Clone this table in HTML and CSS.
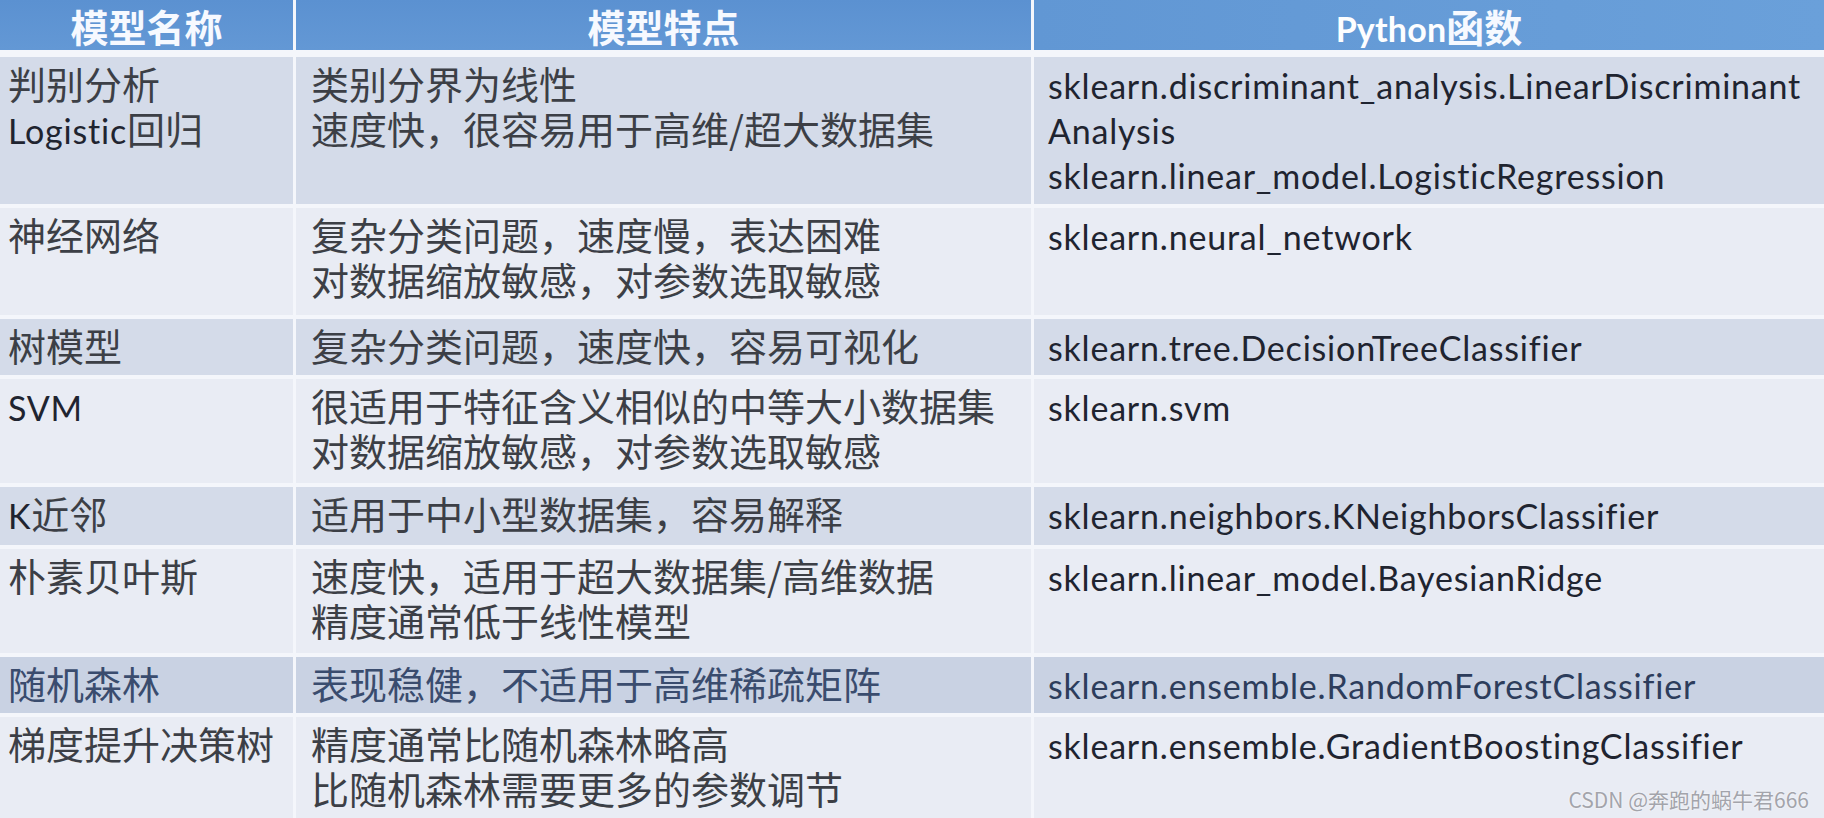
FILE: index.html
```html
<!DOCTYPE html>
<html lang="zh-CN">
<head>
<meta charset="utf-8">
<title>模型对比</title>
<link rel="stylesheet" href="styles.css">
</head>
<body>
<div class="table">
  <div class="th"><span class="zh">模型名称</span></div>
  <div class="th"><span class="zh">模型特点</span></div>
  <div class="th th-last">Python<span class="zh">函数</span></div>

  <div class="td c1 dark"><div class="ln"><span class="zh">判别分析</span></div><div class="ln">Logistic<span class="zh">回归</span></div></div>
  <div class="td c2 dark"><div class="ln"><span class="zh">类别分界为线性</span></div><div class="ln"><span class="zh">速度快，很容易用于高维/超大数据集</span></div></div>
  <div class="td c3 dark"><div class="ln">sklearn.discriminant_analysis.LinearDiscriminant</div><div class="ln">Analysis</div><div class="ln">sklearn.linear_model.LogisticRegression</div></div>

  <div class="td c1 light"><div class="ln"><span class="zh">神经网络</span></div></div>
  <div class="td c2 light"><div class="ln"><span class="zh">复杂分类问题，速度慢，表达困难</span></div><div class="ln"><span class="zh">对数据缩放敏感，对参数选取敏感</span></div></div>
  <div class="td c3 light"><div class="ln">sklearn.neural_network</div></div>

  <div class="td c1 dark"><div class="ln"><span class="zh">树模型</span></div></div>
  <div class="td c2 dark"><div class="ln"><span class="zh">复杂分类问题，速度快，容易可视化</span></div></div>
  <div class="td c3 dark"><div class="ln">sklearn.tree.DecisionTreeClassifier</div></div>

  <div class="td c1 light"><div class="ln">SVM</div></div>
  <div class="td c2 light"><div class="ln"><span class="zh">很适用于特征含义相似的中等大小数据集</span></div><div class="ln"><span class="zh">对数据缩放敏感，对参数选取敏感</span></div></div>
  <div class="td c3 light"><div class="ln">sklearn.svm</div></div>

  <div class="td c1 dark"><div class="ln">K<span class="zh">近邻</span></div></div>
  <div class="td c2 dark"><div class="ln"><span class="zh">适用于中小型数据集，容易解释</span></div></div>
  <div class="td c3 dark"><div class="ln">sklearn.neighbors.KNeighborsClassifier</div></div>

  <div class="td c1 light"><div class="ln"><span class="zh">朴素贝叶斯</span></div></div>
  <div class="td c2 light"><div class="ln"><span class="zh">速度快，适用于超大数据集/高维数据</span></div><div class="ln"><span class="zh">精度通常低于线性模型</span></div></div>
  <div class="td c3 light"><div class="ln">sklearn.linear_model.BayesianRidge</div></div>

  <div class="td c1 hl"><div class="ln"><span class="zh">随机森林</span></div></div>
  <div class="td c2 hl"><div class="ln"><span class="zh">表现稳健，不适用于高维稀疏矩阵</span></div></div>
  <div class="td c3 hl"><div class="ln">sklearn.ensemble.RandomForestClassifier</div></div>

  <div class="td c1 light"><div class="ln"><span class="zh">梯度提升决策树</span></div></div>
  <div class="td c2 light"><div class="ln"><span class="zh">精度通常比随机森林略高</span></div><div class="ln"><span class="zh">比随机森林需要更多的参数调节</span></div></div>
  <div class="td c3 light"><div class="ln">sklearn.ensemble.GradientBoostingClassifier</div></div>
</div>
<div class="watermark">CSDN @奔跑的蜗牛君666</div>
</body>
</html>
```

FILE: styles.css
```css
html, body {
  margin: 0;
  padding: 0;
}
body {
  width: 1824px;
  height: 818px;
  overflow: hidden;
  background: #f4f6fb;
  position: relative;
  font-family: Lato, "Noto Sans CJK SC", sans-serif;
  font-size: 34px;
  letter-spacing: 0.8px;
  color: #1f2430;
}
.table {
  display: grid;
  grid-template-columns: 293px 735px 1fr;
  grid-template-rows: 53px 147px 107px 56px 104px 58px 104px 56px 1fr;
  column-gap: 3px;
  row-gap: 4px;
  height: 818px;
}
.zh {
  font-family: "Noto Sans CJK SC", sans-serif;
  font-size: 38px;
  letter-spacing: 0;
  line-height: 38px;
  color: #3c3f46;
}
.th {
  height: 50px;
  box-sizing: border-box;
  padding-top: 6px;
  line-height: 45px;
  text-align: center;
  background: linear-gradient(180deg, #5b91d1 0%, #6398d5 100%);
  color: #fdfeff;
  font-weight: 700;
  letter-spacing: 0.2px;
  white-space: nowrap;
}
.th .zh {
  color: #f6f9ff;
  font-weight: 700;
}
.th-last {
  background: linear-gradient(90deg, #6197d4 0%, #6aa0da 100%);
}
.td {
  box-sizing: border-box;
  padding-top: 6px;
  white-space: nowrap;
}
.c1 { padding-left: 8px; }
.c2 { padding-left: 15px; }
.c3 { padding-left: 14px; }
.ln {
  height: 45px;
  line-height: 45px;
}
.dark { background: #d4dbe9; }
.light { background: #e9ecf4; }
.hl { background: #c9d2e3; color: #2d3d5c; }
.hl .zh { color: #3a4c6e; }
.watermark {
  position: absolute;
  right: 15px;
  bottom: 6px;
  font-family: "Noto Sans CJK SC", sans-serif;
  font-size: 21px;
  line-height: 26px;
  letter-spacing: 0;
  color: #a3a4ab;
  text-shadow: 0 0 2px #ffffff;
}
```
